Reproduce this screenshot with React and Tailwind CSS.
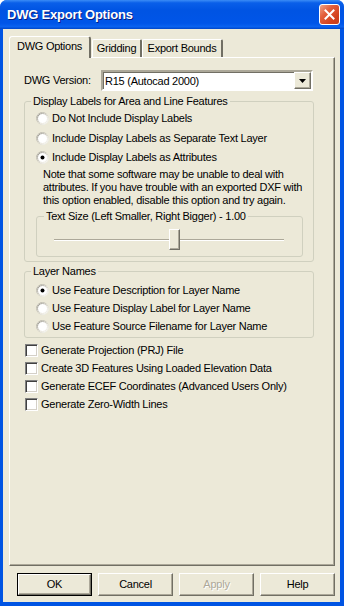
import React from 'react';

const Radio = ({ checked }) => (
  <svg width="13" height="13" viewBox="0 0 13 13" className="shrink-0">
    <defs>
      <linearGradient id="rimOuter" x1="0" y1="0" x2="1" y2="1">
        <stop offset="0%" stopColor="#a9a69a" />
        <stop offset="55%" stopColor="#d6d3c6" />
        <stop offset="100%" stopColor="#ffffff" />
      </linearGradient>
      <linearGradient id="rimInner" x1="0" y1="0" x2="1" y2="1">
        <stop offset="0%" stopColor="#8a887f" />
        <stop offset="60%" stopColor="#e4e1d6" />
        <stop offset="100%" stopColor="#f4f2ea" />
      </linearGradient>
    </defs>
    <circle cx="6.5" cy="6.5" r="6" fill="#ffffff" stroke="url(#rimOuter)" strokeWidth="1" />
    <circle cx="6.5" cy="6.5" r="5" fill="none" stroke="url(#rimInner)" strokeWidth="1" />
    {checked && <circle cx="6.5" cy="6.5" r="2" fill="#000000" />}
  </svg>
);

const Checkbox = () => (
  <div className="w-[13px] h-[13px] shrink-0 bg-white border border-t-[#808080] border-l-[#808080] border-r-white border-b-white shadow-[inset_1px_1px_0_#404040,inset_-1px_-1px_0_#d4d0c8]" />
);

const RadioRow = ({ label, checked, h }) => (
  <div className={`flex items-center gap-[3px] pl-[11px] ${h}`}>
    <Radio checked={checked} />
    <span>{label}</span>
  </div>
);

const CheckRow = ({ label }) => (
  <div className="flex items-center gap-[3px] ml-[1px] h-[18px]">
    <Checkbox />
    <span>{label}</span>
  </div>
);

const Button = ({ label, primary, disabled }) => (
  <div
    className={`w-[75px] h-[23px] flex items-center justify-center bg-[#ece9d8] ${
      primary ? 'border border-black' : ''
    }`}
  >
    <div className="w-full h-full flex items-center justify-center border border-t-white border-l-white border-r-[#716f64] border-b-[#716f64] shadow-[inset_-1px_-1px_0_#aca899]">
      <span className={disabled ? 'text-[#aca899] [text-shadow:1px_1px_0_#ffffff]' : 'text-black'}>{label}</span>
    </div>
  </div>
);

export default function App() {
  return (
    <div className="w-[344px] h-[606px] bg-white font-['Liberation_Sans',Arial,sans-serif] text-[11px] leading-[13px] tracking-[-0.25px] text-black select-none">
      <div className="w-full h-full flex flex-col rounded-t-[7px] bg-[#0054e3] overflow-hidden">
        {/* Title bar */}
        <div className="h-[29px] shrink-0 flex items-center pl-[7px] pr-[4px] bg-[linear-gradient(to_bottom,#3b8cf6_0%,#0a5fe9_10%,#0054e3_35%,#0055e8_80%,#0a62f0_92%,#0045c8_100%)]">
          <span className="flex-1 text-white font-bold text-[13px] tracking-[-0.2px] [text-shadow:1px_1px_0_#0a1e80]">DWG Export Options</span>
          <div className="w-[21px] h-[21px] rounded-[3px] border border-white bg-[linear-gradient(135deg,#f0a58a_0%,#e35f3c_35%,#d2401c_75%,#c5401f_100%)] flex items-center justify-center">
            <svg width="11" height="11" viewBox="0 0 11 11">
              <path d="M1.5 1.5 L9.5 9.5 M9.5 1.5 L1.5 9.5" stroke="#ffffff" strokeWidth="2" strokeLinecap="square" />
            </svg>
          </div>
        </div>

        {/* Body */}
        <div className="flex-1 flex flex-col ml-[3px] mr-[4px] mb-[4px] bg-[#ece9d8]">
          {/* Tabs */}
          <div className="flex items-end ml-[6px] pt-[7px]">
            <div className="relative z-10 w-[82px] h-[22px] -mb-[1px] flex justify-center pt-[3px] bg-[#ece9d8] rounded-t-[3px] border-t border-l border-white border-r-2 border-r-[#716f64]">
              DWG Options
            </div>
            <div className="w-[50px] h-[18px] ml-[1px] flex items-center justify-center rounded-t-[2px] border-t border-l border-white border-r-2 border-r-[#716f64]">
              Gridding
            </div>
            <div className="w-[81px] h-[18px] flex items-center justify-center rounded-t-[2px] border-t border-l border-white border-r-2 border-r-[#716f64]">
              Export Bounds
            </div>
          </div>

          {/* Panel */}
          <div className="flex-1 ml-[6px] mr-[5px] flex flex-col pl-[14px] border-t border-l border-white border-r border-b border-r-[#716f64] border-b-[#716f64] shadow-[inset_-1px_-1px_0_#aca899]">
            <div className="flex items-center mt-[12px] h-[21px]">
              <span className="w-[77px]">DWG Version:</span>
              <div className="w-[212px] h-[21px] flex items-center bg-white border-2 border-t-[#aca899] border-l-[#aca899] border-r-white border-b-white shadow-[inset_1px_1px_0_#716f64]">
                <span className="flex-1 pl-[2px] pt-[1px]">R15 (Autocad 2000)</span>
                <div className="w-[17px] h-[17px] flex items-center justify-center bg-[#ece9d8] border border-t-white border-l-white border-r-[#716f64] border-b-[#716f64] shadow-[inset_-1px_-1px_0_#aca899]">
                  <svg width="7" height="4" viewBox="0 0 7 4">
                    <path d="M0 0 H7 L3.5 4 Z" fill="#000000" />
                  </svg>
                </div>
              </div>
            </div>

            <fieldset className="w-[290px] mt-[4px] border border-[#d0d0bf] rounded-[3px] pb-[4px]">
              <legend className="ml-[6px] px-[2px]">Display Labels for Area and Line Features</legend>
              <RadioRow label="Do Not Include Display Labels" h="h-[20px]" />
              <RadioRow label="Include Display Labels as Separate Text Layer" h="h-[20px]" />
              <RadioRow label="Include Display Labels as Attributes" checked h="h-[19px]" />
              <p className="mt-[1px] pl-[18px]">
                Note that some software may be unable to deal with attributes. If you have trouble with an exported DXF with this option enabled, disable this option and try again.
              </p>
              <fieldset className="mt-[3px] ml-[11px] mr-[10px] border border-[#d0d0bf] rounded-[3px] pb-[6px]">
                <legend className="ml-[7px] px-[2px]">Text Size (Left Smaller, Right Bigger) - 1.00</legend>
                <div className="relative mt-[6px] h-[21px] ml-[17px] w-[230px] flex items-center">
                  <div className="w-full h-[2px] border-t border-[#aca899] border-b border-b-white" />
                  <div className="absolute left-[115px] top-0 w-[11px] h-[21px] bg-[#ece9d8] border border-t-white border-l-white border-r-[#716f64] border-b-[#716f64] shadow-[inset_-1px_-1px_0_#aca899]" />
                </div>
              </fieldset>
            </fieldset>

            <fieldset className="w-[290px] mt-[3px] border border-[#d0d0bf] rounded-[3px] pt-[3px] pb-[2px]">
              <legend className="ml-[6px] px-[2px]">Layer Names</legend>
              <RadioRow label="Use Feature Description for Layer Name" checked h="h-[18px]" />
              <RadioRow label="Use Feature Display Label for Layer Name" h="h-[18px]" />
              <RadioRow label="Use Feature Source Filename for Layer Name" h="h-[18px]" />
            </fieldset>

            <div className="mt-[3px] flex flex-col">
              <CheckRow label="Generate Projection (PRJ) File" />
              <CheckRow label="Create 3D Features Using Loaded Elevation Data" />
              <CheckRow label="Generate ECEF Coordinates (Advanced Users Only)" />
              <CheckRow label="Generate Zero-Width Lines" />
            </div>
          </div>

          {/* Buttons */}
          <div className="flex justify-end gap-[6px] mt-[7px] mb-[6px] mr-[5px]">
            <Button label="OK" primary />
            <Button label="Cancel" />
            <Button label="Apply" disabled />
            <Button label="Help" />
          </div>
        </div>
      </div>
    </div>
  );
}
